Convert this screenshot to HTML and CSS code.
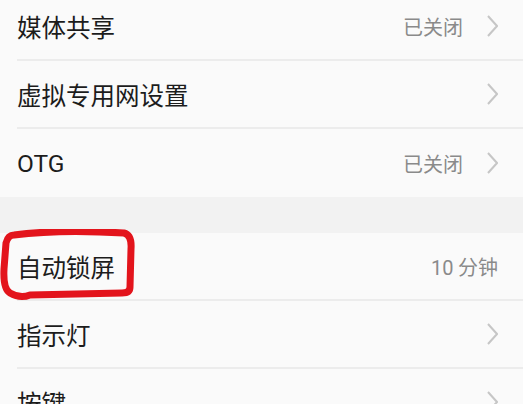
FILE: index.html
```html
<!DOCTYPE html>
<html lang="zh-CN">
<head>
<meta charset="utf-8">
<link rel="stylesheet" href="styles.css">
</head>
<body>
<div class="page">
  <div class="group first">
    <div class="row"><span class="title">媒体共享</span><span class="right"><span class="value">已关闭</span><svg class="chev" width="11" height="22" viewBox="0 0 11 22"><polyline points="1,1 10,11 1,21" fill="none" stroke="#c6c6c6" stroke-width="2"/></svg></span></div>
    <div class="row"><span class="title">虚拟专用网设置</span><span class="right"><svg class="chev" width="11" height="22" viewBox="0 0 11 22"><polyline points="1,1 10,11 1,21" fill="none" stroke="#c6c6c6" stroke-width="2"/></svg></span></div>
    <div class="row last"><span class="title latin">OTG</span><span class="right"><span class="value">已关闭</span><svg class="chev" width="11" height="22" viewBox="0 0 11 22"><polyline points="1,1 10,11 1,21" fill="none" stroke="#c6c6c6" stroke-width="2"/></svg></span></div>
  </div>
  <div class="gap"></div>
  <div class="group">
    <div class="row"><span class="title">自动锁屏</span><span class="right"><span class="value"><span class="latin">10</span> 分钟</span></span></div>
    <div class="row"><span class="title">指示灯</span><span class="right"><svg class="chev" width="11" height="22" viewBox="0 0 11 22"><polyline points="1,1 10,11 1,21" fill="none" stroke="#c6c6c6" stroke-width="2"/></svg></span></div>
    <div class="row"><span class="title">按键</span><span class="right"><svg class="chev" width="11" height="22" viewBox="0 0 11 22"><polyline points="1,1 10,11 1,21" fill="none" stroke="#c6c6c6" stroke-width="2"/></svg></span></div>
  </div>
  <svg class="mark" width="140" height="80" viewBox="0 0 140 80">
    <path d="M14 6 Q60 0 124 4 Q132 6 131 20 L130 58 Q130 64 122 64 L30 66 Q20 70 10 64 Q3 60 4 40 L6 14 Q8 6 14 6 Z" fill="none" stroke="#e3141c" stroke-width="7" stroke-linejoin="round"/>
  </svg>
</div>
</body>
</html>
```
FILE: styles.css
```css
html, body {
  margin: 0;
  padding: 0;
  background: #fafafa;
  overflow: hidden;
}
.page {
  position: relative;
  width: 523px;
  height: 404px;
  overflow: hidden;
  background: #fafafa;
  font-family: "Noto Sans CJK SC", "Noto Sans", sans-serif;
}
.group.first {
  margin-top: -7px;
}
.row {
  height: 68px;
  margin-left: 17px;
  padding-right: 25px;
  border-bottom: 2px solid #ececec;
  box-sizing: border-box;
  display: flex;
  align-items: center;
  justify-content: space-between;
}
.row.last {
  border-bottom: none;
}
.title {
  font-size: 24.5px;
  color: #1c1c1c;
  padding-left: 0;
}
.latin {
  font-family: Roboto, "Noto Sans", sans-serif;
}
.right {
  display: flex;
  align-items: center;
  gap: 24px;
}
.value {
  font-size: 20px;
  color: #8a8a8a;
}
.chev {
  display: block;
}
.gap {
  height: 36px;
  background: #f2f2f2;
}
.mark {
  position: absolute;
  left: 0;
  top: 229px;
}
```
